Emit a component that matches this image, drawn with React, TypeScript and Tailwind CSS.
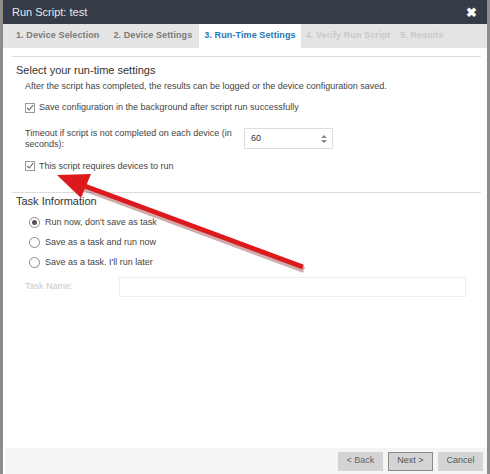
import React from 'react';

const tabs = [
  { label: '1. Device Selection', state: 'done' },
  { label: '2. Device Settings', state: 'done' },
  { label: '3. Run-Time Settings', state: 'active' },
  { label: '4. Verify Run Script', state: 'todo' },
  { label: '5. Results', state: 'todo' },
];

const Check = () => (
  <span className="w-[10px] h-[10px] border border-[#9a9a9a] bg-white flex items-center justify-center shrink-0">
    <svg width="10" height="10" viewBox="0 0 10 10">
      <path d="M1.5 5 L4 7.5 L9 1.5" fill="none" stroke="#6b6b6b" strokeWidth="1.4" />
    </svg>
  </span>
);

const Radio = ({ on }: { on?: boolean }) => (
  <span className="w-[11px] h-[11px] rounded-full border border-[#8a8a8a] bg-white flex items-center justify-center shrink-0">
    {on && <span className="w-[5px] h-[5px] rounded-full bg-[#555]" />}
  </span>
);

const radios = [
  { label: "Run now, don't save as task", on: true },
  { label: 'Save as a task and run now', on: false },
  { label: "Save as a task. I'll run later", on: false },
];

export default function App() {
  return (
    <div
      className="relative w-[490px] h-[474px] bg-white overflow-hidden flex flex-col border-l-[3px] border-r-[3px] border-[#8c8c8c] text-[#444]"
      style={{ fontFamily: '"Liberation Sans", Arial, sans-serif' }}
    >
      <div className="h-[24px] shrink-0 bg-[#353b47] flex items-center justify-between pl-[9px] pr-[10px]">
        <span className="text-[11px] text-[#e8e8e8]">Run Script: test</span>
        <span className="text-[13px] font-bold text-white leading-none">✖</span>
      </div>
      <div className="h-[24px] shrink-0 bg-[#e4e4e4] flex items-stretch pl-[6px] text-[9px] font-bold whitespace-nowrap tracking-[0.1px]">
        {tabs.map((t) => (
          <div
            key={t.label}
            className={
              t.state === 'active'
                ? 'px-[5px] flex items-center bg-white text-[#2277b5]'
                : t.state === 'done'
                ? 'px-[7px] flex items-center text-[#7a7a7a]'
                : 'px-[5px] flex items-center text-[#c9c9c9]'
            }
          >
            {t.label}
          </div>
        ))}
      </div>

      <div className="flex-1 pl-[9px] pr-[6px] pt-[8px]">
        <div className="border-t border-[#dcdcdc] pt-[5px]">
          <div className="text-[11px] text-[#333] pl-[4px]">Select your run-time settings</div>
          <div className="pl-[13px] text-[9px]">
            <div className="mt-[1px]">After the script has completed, the results can be logged or the device configuration saved.</div>
            <div className="mt-[8px] flex items-center gap-[4px]">
              <Check />
              <span>Save configuration in the background after script run successfully</span>
            </div>
            <div className="mt-[13px] flex items-center">
              <div className="w-[216px] leading-[11px]">Timeout if script is not completed on each device (in seconds):</div>
              <div className="ml-[3px] w-[89px] h-[21px] border border-[#dedede] flex items-center justify-between pl-[6px] pr-[5px] text-[#333]">
                <span>60</span>
                <svg width="6" height="10" viewBox="0 0 6 10">
                  <path d="M0 4 L3 1 L6 4 Z M0 6 L3 9 L6 6 Z" fill="#888" />
                </svg>
              </div>
            </div>
            <div className="mt-[10px] flex items-center gap-[4px]">
              <Check />
              <span>This script requires devices to run</span>
            </div>
          </div>
        </div>

        <div className="border-t border-[#dcdcdc] mt-[19px] pt-0">
          <div className="text-[11px] text-[#333] pl-[4px]">Task Information</div>
          <div className="pl-[17px] text-[9px] flex flex-col gap-[8px] mt-[7px]">
            {radios.map((r) => (
              <div key={r.label} className="h-[12px] flex items-center gap-[5px]">
                <Radio on={r.on} />
                <span>{r.label}</span>
              </div>
            ))}
          </div>
          <div className="flex items-center mt-[8px] pl-[13px]">
            <span className="w-[94px] text-[9px] text-[#c8c8c8]">Task Name:</span>
            <div className="w-[347px] h-[20px] border border-[#eeeeee]" />
          </div>
        </div>
      </div>

      <div className="h-[26px] shrink-0 bg-[#f5f5f5] ml-[2px] flex items-center justify-end gap-[5px] pr-[4px] text-[9px]">
        <button className="w-[45px] h-[19px] bg-[#d4d4d4] text-[#666]">&lt; Back</button>
        <button className="w-[45px] h-[19px] bg-[#d4d4d4] border border-[#8a8a8a] text-[#555]">Next &gt;</button>
        <button className="w-[45px] h-[19px] bg-[#d4d4d4] text-[#555]">Cancel</button>
      </div>

      <svg className="absolute left-[-3px] top-0 pointer-events-none" width="490" height="474">
        <line x1="303" y1="268" x2="82" y2="186" stroke="#7a1010" strokeOpacity="0.35" strokeWidth="6" transform="translate(1,2)" />
        <line x1="303" y1="267" x2="82" y2="185" stroke="#dc1a1e" strokeWidth="5" />
        <polygon points="57,175 91,174 81,198" fill="#dc1a1e" />
      </svg>
    </div>
  );
}
